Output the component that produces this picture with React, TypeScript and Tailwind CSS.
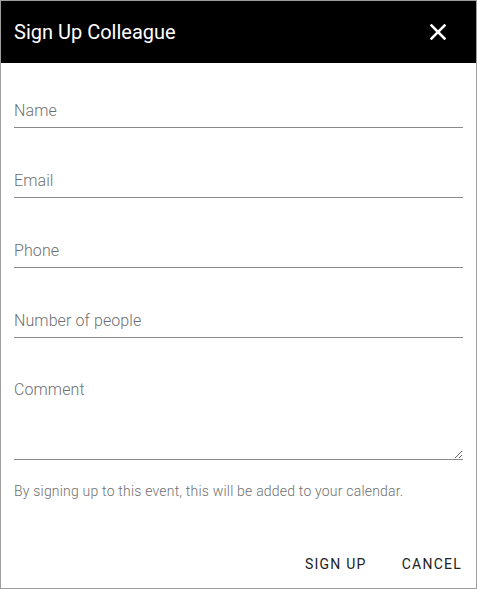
import React from "react";

function Field({ label, first }: { label: string; first?: boolean }) {
  return (
    <div className={first ? "mt-[36px]" : "mt-[41px]"}>
      <input
        placeholder={label}
        className="block w-full h-[24px] mb-[4px] text-[16px] font-light tracking-[0.1px] leading-[24px] text-[#212121] placeholder:text-[#6f6f6f] outline-none bg-transparent"
      />
      <div className="h-px bg-[#8a8a8a]" />
    </div>
  );
}

export default function App() {
  return (
    <div className="w-[477px] h-[589px] border border-[#9e9e9e] bg-white font-['Roboto',sans-serif] flex flex-col">
      <div className="h-[62px] bg-black flex items-center justify-between pl-[13px] pr-[30px] shrink-0">
        <span className="text-white text-[20px] font-normal leading-none">Sign Up Colleague</span>
        <svg width="16" height="16" viewBox="0 0 16 16">
          <path d="M1.5 1.5 L14.5 14.5 M14.5 1.5 L1.5 14.5" stroke="white" strokeWidth="2.5" strokeLinecap="square" />
        </svg>
      </div>
      <div className="px-[13px] flex flex-col">
        <Field label="Name" first />
        <Field label="Email" />
        <Field label="Phone" />
        <Field label="Number of people" />
        <div className="mt-[40px]">
          <textarea
            placeholder="Comment"
            className="block w-full h-[82px] text-[16px] font-light tracking-[0.1px] leading-[24px] text-[#212121] placeholder:text-[#6f6f6f] outline-none bg-transparent resize-y border-b border-[#8a8a8a]"
          />
        </div>
        <p className="mt-[21px] text-[14px] font-light tracking-[0.2px] leading-[20px] text-[#6f6f6f]">
          By signing up to this event, this will be added to your calendar.
        </p>
      </div>
      <div className="mt-auto mb-[14px] flex justify-end items-center gap-[35px] pr-[14px]">
        <span className="text-[14px] font-normal tracking-[1.25px] text-[#212121] leading-[20px]">SIGN UP</span>
        <span className="text-[14px] font-normal tracking-[1.25px] text-[#212121] leading-[20px]">CANCEL</span>
      </div>
    </div>
  );
}
